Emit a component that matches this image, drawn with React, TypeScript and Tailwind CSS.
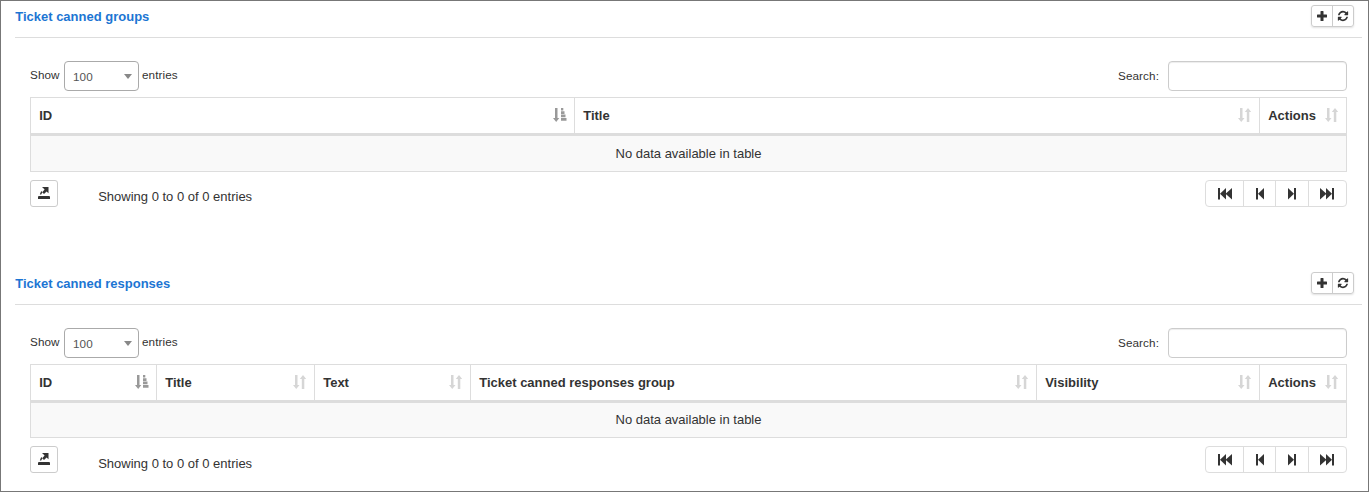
import React from "react";

type Column = { label: string; width: string; sorted?: boolean };

const groupColumns: Column[] = [
  { label: "ID", width: "w-[544px]", sorted: true },
  { label: "Title", width: "w-[685px]" },
  { label: "Actions", width: "w-[87px]" },
];

const responseColumns: Column[] = [
  { label: "ID", width: "w-[126px]", sorted: true },
  { label: "Title", width: "w-[158px]" },
  { label: "Text", width: "w-[156px]" },
  { label: "Ticket canned responses group", width: "w-[566px]" },
  { label: "Visibility", width: "w-[223px]" },
  { label: "Actions", width: "w-[87px]" },
];

function PlusIcon() {
  return (
    <svg width="10" height="10" viewBox="0 0 10 10" fill="#333">
      <path d="M4 0h2q.5 0 .5.5v3h3q.5 0 .5.5v2q0 .5-.5.5h-3v3q0 .5-.5.5H4q-.5 0-.5-.5v-3h-3Q0 6.500 0 6V4q0-.5.5-.5h3v-3Q3.500 0 4 0z" />
    </svg>
  );
}

function RefreshIcon() {
  return (
    <svg width="12" height="12" viewBox="0 0 1792 1792" fill="#333">
      <path d="M1639 1056q0 5-1 7-64 268-268 434.500t-478 166.500q-146 0-282.500-55t-243.500-157l-129 129q-19 19-45 19t-45-19-19-45v-448q0-26 19-45t45-19h448q26 0 45 19t19 45-19 45l-137 137q71 66 161 102t187 36q134 0 250-65t186-179q11-17 53-117 8-23 30-23h192q13 0 22.500 9.500t9.500 22.500zm25-800v448q0 26-19 45t-45 19h-448q-26 0-45-19t-19-45 19-45l138-138q-148-137-349-137-134 0-250 65t-186 179q-11 17-53 117-8 23-30 23h-199q-13 0-22.500-9.500t-9.500-22.500v-7q65-268 270-434.500t480-166.500q146 0 284 55.500t245 156.500l130-129q19-19 45-19t45 19 19 45z" />
    </svg>
  );
}

function SortIcon({ sorted }: { sorted?: boolean }) {
  if (sorted) {
    return (
      <svg width="14" height="14" viewBox="0 0 14 14" fill="#999">
        <path d="M2 0h2.500v10H6.300L3.200 14 0 10h2z" />
        <path d="M8 0h2.300v2.600H8zM8 3.300h3.500v2.600H8zM8 6.600h4.500v2.600H8zM8 10h5.500v2.700H8z" />
      </svg>
    );
  }
  return (
    <svg width="13" height="14" viewBox="0 0 13 14" fill="#d6d6d6">
      <path d="M2 0h2.500v10h2L3.250 14 0 10h2z" />
      <path d="M8.800 14h2.500V4h1.900L10 0 6.800 4h2z" />
    </svg>
  );
}

function ExportIcon() {
  return (
    <svg width="12" height="12" viewBox="0 0 12 12" fill="#333">
      <path d="M4 0h6.500v6.200L8.600 4.400 6 7 4.200 5.200l2.400-2.600z" />
      <path d="M3.200 4l1.200 1.200L3.200 7.400H1.800z" />
      <path d="M.5 9h11l.5.500V12H0V9.500z" />
    </svg>
  );
}

function StepIcon({ double, forward }: { double?: boolean; forward?: boolean }) {
  const width = double ? 14 : 8;
  return (
    <svg
      width={width}
      height="12"
      viewBox={`0 0 ${width} 12`}
      fill="#333"
      className={forward ? "-scale-x-100" : ""}
    >
      <path d="M0 0h2v11.500H0z" />
      <path d="M8 0v11.500L2 5.750z" />
      {double && <path d="M14 0v11.500L7.500 5.750z" />}
    </svg>
  );
}

function Panel({
  title,
  columns,
  rowStyle,
  infoPadding,
}: {
  title: string;
  columns: Column[];
  rowStyle: string;
  infoPadding: string;
}) {
  return (
    <section className="pl-[14px] pr-[6px]">
      <header className="flex h-[33px] items-start justify-between border-b border-[#ddd] pr-2">
        <h2 className="pt-1 pl-[0.2px] text-[13px] leading-[15px] font-bold text-[#1c75d3]">{title}</h2>
        <div className="flex h-[22px] w-[43px] rounded-[3px] border border-[#ccc] shadow-[0_1px_2px_rgba(0,0,0,0.12)]">
          <button aria-label="Add" className="flex w-[21px] items-center justify-center border-r border-[#ccc] pr-px">
            <PlusIcon />
          </button>
          <button aria-label="Refresh" className="flex w-5 items-center justify-center pr-px">
            <RefreshIcon />
          </button>
        </div>
      </header>

      <div className="pt-[23px] pr-[15px] pl-[15px]">
        <div className="flex h-[30px] justify-between text-[11.700px] leading-[14px] tracking-[0.1px]">
          <div className="flex">
            <span className="w-[34px] pt-[7px]">Show</span>
            <div className="flex h-[30px] w-[75px] items-center justify-between rounded-[4px] border border-[#aaa] pr-[6px] pl-2 text-[#555]">
              <span className="pt-[2px]">100</span>
              <svg width="8" height="5" viewBox="0 0 8 5" fill="#888">
                <path d="M0 0h8L4 5z" />
              </svg>
            </div>
            <span className="pt-[7px] pl-[3px]">entries</span>
          </div>
          <label className="flex">
            <span className="pt-2 pr-[9px]">Search:</span>
            <input className="h-[30px] w-[179px] rounded-[4px] border border-[#ccc] px-2 shadow-[inset_0_1px_1px_rgba(0,0,0,0.075)] outline-none" />
          </label>
        </div>

        <div className="mt-[6px] w-[1317px] border border-[#ddd] text-[13px]">
          <div className="flex h-[38px] border-b-3 border-[#ddd] font-bold">
            {columns.map((column, index) => (
              <div
                key={column.label}
                className={`${column.width} flex shrink-0 items-center justify-between border-[#ddd] pb-px pl-[8.200px] ${
                  index < columns.length - 1 ? "border-r" : ""
                } ${column.sorted ? "pr-[7px]" : index < columns.length - 1 ? "pr-2" : "pr-[9px]"}`}
              >
                <span className="leading-[15px]">{column.label}</span>
                <SortIcon sorted={column.sorted} />
              </div>
            ))}
          </div>
          <div className={`${rowStyle} flex items-start justify-center bg-[#f9f9f9]`}>
            <span className="leading-[15px]">No data available in table</span>
          </div>
        </div>

        <div className="mt-2 flex h-[27px] justify-between text-[13px]">
          <div className="flex">
            <button aria-label="Export" className="flex h-[27px] w-7 justify-center rounded-[3px] border border-[#ccc] pt-[6px]">
              <ExportIcon />
            </button>
            <span className={`${infoPadding} pl-[40.200px] leading-[15px]`}>Showing 0 to 0 of 0 entries</span>
          </div>
          <nav className="flex h-[27px] w-[142px] rounded-[4px] border border-[#ddd]">
            <button aria-label="First" className="flex w-[38px] items-center justify-center border-r border-[#ddd]">
              <StepIcon double />
            </button>
            <button aria-label="Previous" className="flex w-8 items-center justify-center border-r border-[#ddd]">
              <StepIcon />
            </button>
            <button aria-label="Next" className="flex w-[33px] items-center justify-center border-r border-[#ddd]">
              <StepIcon forward />
            </button>
            <button aria-label="Last" className="flex flex-1 items-center justify-center pr-px">
              <StepIcon double forward />
            </button>
          </nav>
        </div>
      </div>
    </section>
  );
}

export default function App() {
  return (
    <main className="flex h-[492px] w-[1369px] flex-col gap-[65px] overflow-hidden border border-[#777] bg-white pt-1 font-['Liberation_Sans',Arial,sans-serif] text-[#333]">
      <Panel title="Ticket canned groups" columns={groupColumns} rowStyle="h-[35px] pt-[10px]" infoPadding="pt-[9px]" />
      <Panel title="Ticket canned responses" columns={responseColumns} rowStyle="h-[34px] pt-[9px]" infoPadding="pt-[10px]" />
    </main>
  );
}
